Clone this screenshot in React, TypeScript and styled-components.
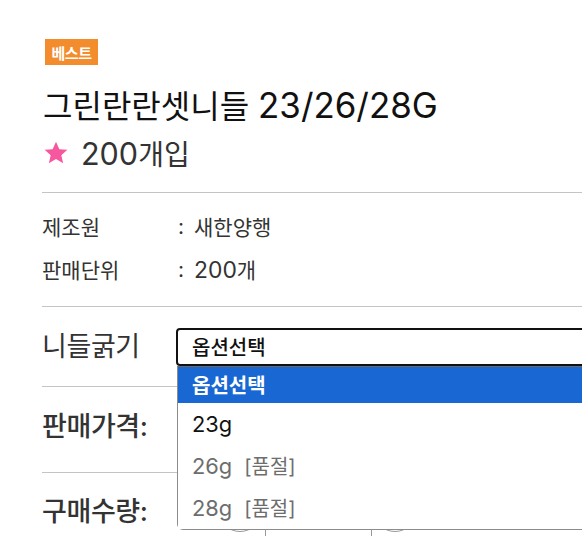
import React from 'react';
import styled, { createGlobalStyle } from 'styled-components';
import { Minus, Plus } from 'lucide-react';

const GlobalStyle = createGlobalStyle`
  html, body {
    margin: 0;
    padding: 0;
    background: #fff;
    overflow: hidden;
  }
  body {
    font-family: Inter, "Noto Sans CJK KR", sans-serif;
    color: #333;
  }
`;

interface Option {
  label: string;
  soldOut?: boolean;
}

const options: Option[] = [
  { label: '23g' },
  { label: '26g', soldOut: true },
  { label: '28g', soldOut: true },
];

const App: React.FC = () => {
  return (
    <>
      <GlobalStyle />
      <Page>
        <Badge>베스트</Badge>
        <Title>
          그린란란셋니들 <Latin>23/26/28G</Latin>
        </Title>
        <SubTitle>
          <Star viewBox="0 0 24 24">
            <path d="M12 1.5l3.1 7 7.4.6-5.6 4.9 1.7 7.4L12 17.5l-6.6 3.9 1.7-7.4L1.5 9.1l7.4-.6z" />
          </Star>
          <span>
            <Latin>200</Latin>개입
          </span>
        </SubTitle>
        <Divider />
        <InfoList>
          <InfoRow>
            <InfoLabel>제조원</InfoLabel>
            <Colon>:</Colon>
            <span>새한양행</span>
          </InfoRow>
          <InfoRow>
            <InfoLabel>판매단위</InfoLabel>
            <Colon>:</Colon>
            <span>
              <Latin>200</Latin>개
            </span>
          </InfoRow>
        </InfoList>
        <Divider />
        <OptionRow>
          <RowLabel>니들굵기</RowLabel>
          <SelectWrap>
            <SelectBox>옵션선택</SelectBox>
            <Dropdown>
              <DropItem selected>옵션선택</DropItem>
              {options.map(o => (
                <DropItem key={o.label} disabled={o.soldOut}>
                  <Latin>{o.label}</Latin>
                  {o.soldOut && <span>[품절]</span>}
                </DropItem>
              ))}
            </Dropdown>
          </SelectWrap>
        </OptionRow>
        <Divider />
        <PriceRow>
          <RowLabel bold>판매가격:</RowLabel>
        </PriceRow>
        <Divider />
        <QtyRow>
          <RowLabel bold>구매수량:</RowLabel>
          <Stepper>
            <RoundBtn>
              <Minus size={18} strokeWidth={1.5} />
            </RoundBtn>
            <QtyInput />
            <RoundBtn>
              <Plus size={18} strokeWidth={1.5} />
            </RoundBtn>
          </Stepper>
        </QtyRow>
      </Page>
    </>
  );
};

export default App;

const Page = styled.div`
  width: 640px;
  padding: 39px 0 0 42px;
  box-sizing: border-box;
`;

const Latin = styled.span`
  font-size: 1.09em;
  letter-spacing: 0;
`;

const Badge = styled.span`
  display: inline-flex;
  align-items: center;
  justify-content: center;
  margin-left: 3px;
  width: 53px;
  height: 26px;
  background: #f28c2c;
  color: #fff;
  font-size: 15px;
  font-weight: 700;
  letter-spacing: -0.5px;
`;

const Title = styled.h1`
  margin: 20px 0 0 1px;
  font-size: 32px;
  line-height: 40px;
  height: 40px;
  font-weight: 400;
  color: #111;
`;

const SubTitle = styled.div`
  display: flex;
  align-items: center;
  gap: 12px;
  margin: 10px 0 21px;
  height: 36px;
  font-size: 28px;
  color: #333;
`;

const Star = styled.svg`
  width: 26px;
  height: 26px;
  fill: #f7579f;
  margin-left: 1px;
`;

const Divider = styled.div`
  height: 1px;
  background: #c4c4c4;
`;

const InfoList = styled.div`
  display: flex;
  flex-direction: column;
  gap: 17px;
  padding: 20px 0 24px;
`;

const InfoRow = styled.div`
  display: flex;
  align-items: center;
  height: 26px;
  font-size: 21px;
  color: #333;
`;

const InfoLabel = styled.span`
  width: 136px;
`;

const Colon = styled.span`
  width: 16px;
`;

const RowLabel = styled.span<{ bold?: boolean }>`
  width: 134px;
  flex-shrink: 0;
  font-size: 27px;
  line-height: 34px;
  font-weight: ${p => (p.bold ? 500 : 400)};
  color: #333;
  letter-spacing: -0.4px;
`;

const OptionRow = styled.div`
  display: flex;
  align-items: center;
  height: 79px;
`;

const SelectWrap = styled.div`
  position: relative;
  flex: 1;
`;

const SelectBox = styled.div`
  height: 38px;
  box-sizing: border-box;
  border: 2px solid #111;
  border-radius: 4px;
  padding: 0 14px;
  display: flex;
  align-items: center;
  font-size: 20px;
  font-weight: 500;
  color: #111;
`;

const Dropdown = styled.ul`
  position: absolute;
  top: 38px;
  left: 1px;
  right: 0;
  margin: 0;
  padding: 0;
  list-style: none;
  background: #fff;
  border: 1px solid #8c8c8c;
  border-top-color: #6a6a6a;
  border-radius: 0 0 6px 6px;
  z-index: 10;
`;

const DropItem = styled.li<{ selected?: boolean; disabled?: boolean }>`
  display: flex;
  align-items: center;
  gap: 12px;
  height: ${p => (p.selected ? 36 : 42)}px;
  padding: 0 14px;
  font-size: 20px;
  font-weight: ${p => (p.selected ? 700 : 400)};
  background: ${p => (p.selected ? '#1967d2' : '#fff')};
  color: ${p => (p.selected ? '#fff' : p.disabled ? '#6d6d6d' : '#111')};
`;

const PriceRow = styled.div`
  display: flex;
  align-items: flex-start;
  box-sizing: border-box;
  padding-top: 23px;
  height: 85px;
`;

const QtyRow = styled.div`
  display: flex;
  align-items: flex-start;
  padding-top: 22px;
  height: 80px;
`;

const Stepper = styled.div`
  display: flex;
  align-items: flex-start;
  margin: -7px 0 0 42px;
`;

const RoundBtn = styled.span`
  width: 44px;
  height: 44px;
  border: 1px solid #999;
  border-radius: 50%;
  box-sizing: border-box;
  display: flex;
  align-items: center;
  justify-content: center;
  color: #555;
`;

const QtyInput = styled.span`
  width: 107px;
  height: 52px;
  box-sizing: border-box;
  margin: 0 1px 0 3px;
  border-left: 1px solid #999;
  border-right: 1px solid #999;
`;
